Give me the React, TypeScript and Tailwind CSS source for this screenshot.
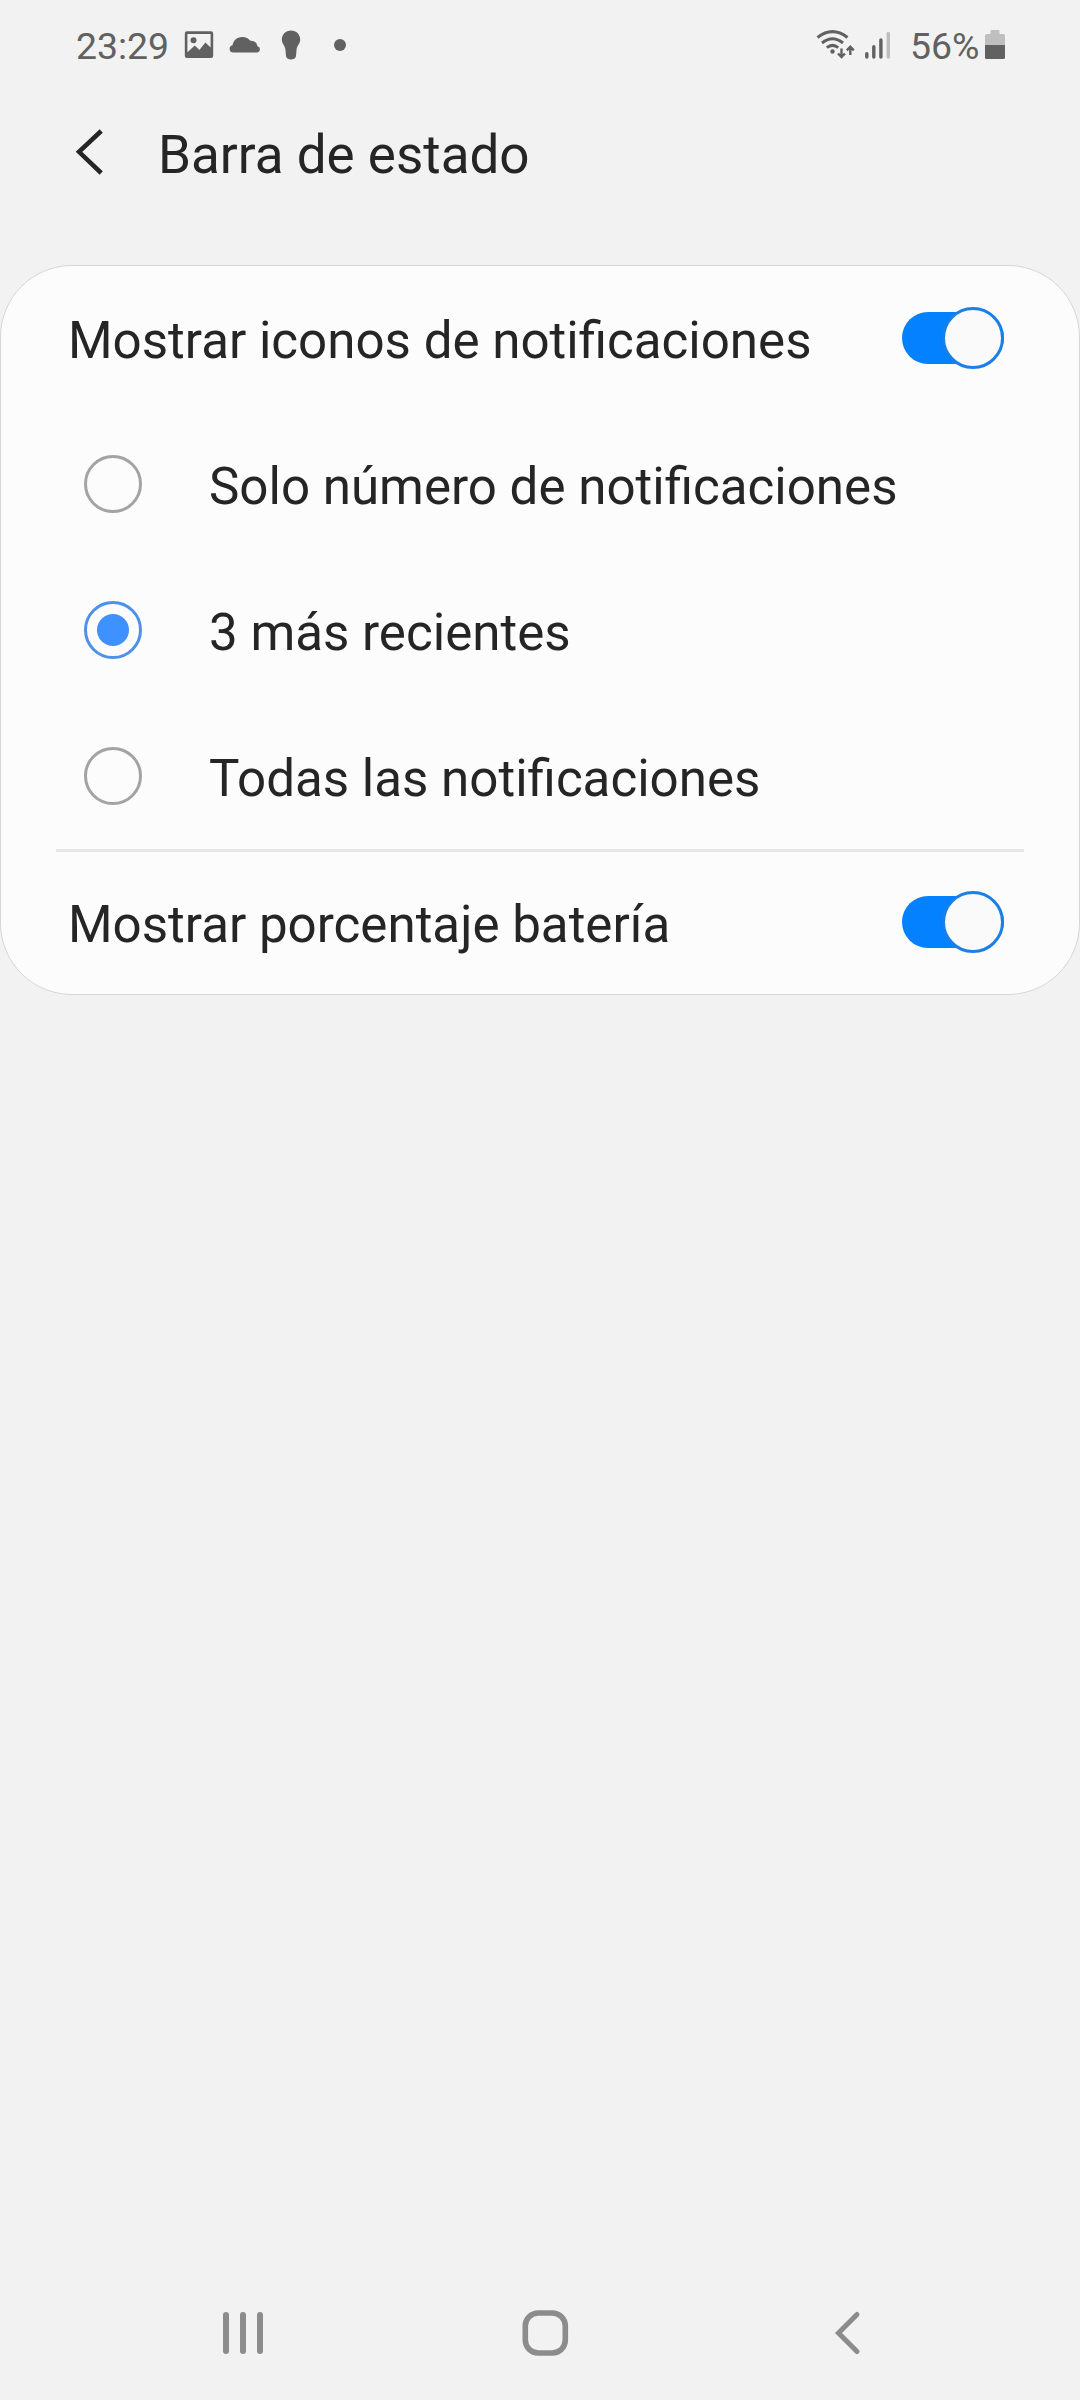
import { useState } from 'react';

const options = ['Solo número de notificaciones', '3 más recientes', 'Todas las notificaciones'];

function StatusBar() {
  return (
    <header className="flex h-[90px] items-center justify-between pl-[76px] pr-[75px] text-[37.4px] leading-[38px] text-[#616161]">
      <div className="flex items-center">
        <span className="w-[104px] pt-[2px]">23:29</span>
        <svg width="180" height="40" viewBox="180 25 180 40" fill="#616161" aria-hidden>
          <path
            fillRule="evenodd"
            d="M187 31.3H211Q213.2 31.3 213.2 33.5V55.8Q213.2 58 211 58H187Q184.8 58 184.8 55.8V33.5Q184.8 31.3 187 31.3ZM187.4 34V52.2L194.8 45.6L199.4 50L205.4 42.6L210.6 47.4V34Z"
          />
          <circle cx="193.5" cy="40.2" r="3" />
          <path d="M233.2 52.4A3.6 3.6 0 0 1 232.4 45.3A10.2 10.2 0 0 1 250.4 40.8Q256.6 40.6 257.5 46.2A3.2 3.2 0 0 1 257.6 52.4Z" />
          <path d="M291 30.4C296.2 30.4 300.2 34.3 300.2 39.4C300.2 43.8 296.8 45.6 296.6 49.5L296 56C295.7 58.4 294 59.4 291 59.4C288 59.4 286.3 58.4 286 56L285.4 49.5C285.2 45.6 281.8 43.8 281.8 39.4C281.8 34.3 285.8 30.4 291 30.4Z" />
          <circle cx="340" cy="45" r="6" />
        </svg>
      </div>
      <div className="flex items-center">
        <svg width="95" height="40" viewBox="815 25 95 40" fill="none" stroke="#616161" aria-hidden>
          <path d="M817.5 37.5Q832.5 25.8 847.5 37.5M822 43Q832.5 34.6 843 43M826.8 47.6Q832.5 43.2 838.2 47.6" strokeWidth="3" />
          <circle cx="832.5" cy="51.5" r="2.2" fill="#616161" stroke="none" />
          <path d="M841.5 48.5V57M838 53.5L841.5 57L845 53.5M850.3 55V46.8M846.8 50.3L850.3 46.8L853.8 50.3" strokeWidth="2.4" />
          <path d="M866.8 53.8V57M873.8 46.8V57M880.9 40V57" strokeWidth="3.4" strokeLinecap="round" />
          <path d="M888.3 33.5V57" stroke="#bdbdbd" strokeWidth="3.4" strokeLinecap="round" />
        </svg>
        <span className="w-[75px] pt-[2px]">56%</span>
        <svg width="20" height="30" viewBox="0 0 20 30" aria-hidden>
          <path d="M5.5 4V1Q5.5 0 6.5 0H13.5Q14.5 0 14.5 1V4H18.5Q20 4 20 5.5V15H0V5.5Q0 4 1.5 4Z" fill="#bfbfbf" />
          <path d="M0 15H20V27.5Q20 29 18.5 29H1.5Q0 29 0 27.5Z" fill="#616161" />
        </svg>
      </div>
    </header>
  );
}

function Switch({ label, defaultOn = true }: { label: string; defaultOn?: boolean }) {
  const [on, setOn] = useState(defaultOn);

  return (
    <div className="flex h-[146px] items-center justify-between pl-[67px] pr-[75px]">
      <span className="pt-[5px]">{label}</span>
      <button
        role="switch"
        aria-checked={on}
        aria-label={label}
        onClick={() => setOn(!on)}
        className={`flex h-[52px] w-[102px] items-center rounded-full ${on ? 'justify-end bg-[#0381fe]' : 'justify-start bg-[#a0a0a0]'}`}
      >
        <span className={`size-[62px] shrink-0 rounded-full border-[3px] bg-[#fafafa] ${on ? 'border-[#1a7fe8]' : 'border-[#a0a0a0]'}`} />
      </button>
    </div>
  );
}

function RadioRow({ label, checked, onSelect }: { label: string; checked: boolean; onSelect: () => void }) {
  return (
    <button role="radio" aria-checked={checked} onClick={onSelect} className="flex h-[146px] w-full items-center pl-[83px] text-left">
      <span
        className={`flex size-[58px] items-center justify-center rounded-full border-[3px] ${checked ? 'border-[#4d91ea]' : 'border-[#a3a3a3]'}`}
      >
        {checked && <span className="size-[32px] rounded-full bg-[#3e91ff]" />}
      </span>
      <span className="pl-[67px] pt-[5px]">{label}</span>
    </button>
  );
}

export default function App() {
  const [selected, setSelected] = useState(1);

  return (
    <div className="flex h-[2400px] w-[1080px] flex-col bg-[#f2f2f2] font-[Roboto,sans-serif] text-[#252525]">
      <StatusBar />

      <div className="flex h-[175px] items-start pl-[74px] pt-[36px]">
        <svg width="30" height="52" viewBox="74 126 30 52" fill="none" stroke="#252525" strokeWidth="4.5" aria-hidden>
          <path d="M101.2 131L79 151.8L101.2 173" />
        </svg>
        <h1 className="pl-[54px] pt-px text-[53px] leading-[56px]">Barra de estado</h1>
      </div>

      <main className="h-[730px] rounded-[72px] border border-[#d6d6d6] bg-[#fcfcfc] text-[51.1px] leading-[59px]">
        <div className="-mt-px">
          <Switch label="Mostrar iconos de notificaciones" />
          <div role="radiogroup">
            {options.map((label, i) => (
              <RadioRow key={label} label={label} checked={selected === i} onSelect={() => setSelected(i)} />
            ))}
          </div>
          <hr className="mx-[55px] -mb-[3px] border-t-[3px] border-[#e6e6e6]" />
          <Switch label="Mostrar porcentaje batería" />
        </div>
      </main>

      <nav className="mt-auto flex h-[135px] items-center pl-[219px]">
        <svg width="48" height="54" viewBox="219 2306 48 54" stroke="#8c8c8c" strokeWidth="6" strokeLinecap="round" aria-hidden>
          <path d="M226 2315V2351M243 2315V2351M260 2315V2351" />
        </svg>
        <svg className="ml-[251px]" width="54" height="54" viewBox="518 2306 54 54" fill="none" stroke="#8c8c8c" strokeWidth="5.6" aria-hidden>
          <rect x="525.3" y="2313" width="40" height="40" rx="13" />
        </svg>
        <svg className="ml-[259px]" width="34" height="54" viewBox="831 2306 34 54" fill="none" stroke="#8c8c8c" strokeWidth="5" strokeLinecap="round" aria-hidden>
          <path d="M857 2314.5L838.5 2333L857 2351.5" />
        </svg>
      </nav>
    </div>
  );
}
